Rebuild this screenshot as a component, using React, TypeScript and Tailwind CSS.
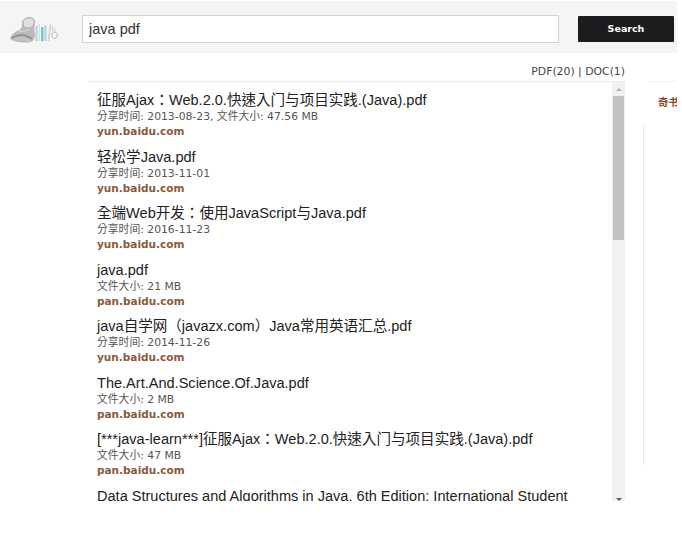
const results = [
  { title: '征服Ajax：Web.2.0.快速入门与项目实践.(Java).pdf', meta: '分享时间: 2013-08-23, 文件大小: 47.56 MB', source: 'yun.baidu.com' },
  { title: '轻松学Java.pdf', meta: '分享时间: 2013-11-01', source: 'yun.baidu.com' },
  { title: '全端Web开发：使用JavaScript与Java.pdf', meta: '分享时间: 2016-11-23', source: 'yun.baidu.com' },
  { title: 'java.pdf', meta: '文件大小: 21 MB', source: 'pan.baidu.com' },
  { title: 'java自学网（javazx.com）Java常用英语汇总.pdf', meta: '分享时间: 2014-11-26', source: 'yun.baidu.com' },
  { title: 'The.Art.And.Science.Of.Java.pdf', meta: '文件大小: 2 MB', source: 'pan.baidu.com' },
  { title: '[***java-learn***]征服Ajax：Web.2.0.快速入门与项目实践.(Java).pdf', meta: '文件大小: 47 MB', source: 'pan.baidu.com' },
  { title: 'Data Structures and Algorithms in Java, 6th Edition: International Student', meta: '', source: '' },
];

function Logo() {
  return (
    <svg width="50" height="28" viewBox="0 0 50 28" className="ml-[10px] shrink-0">
      {/* sketched figure */}
      <path d="M0 24 C1 19 5 17 9 15 C11 14 12 12 12 9 C12 5 15 2 19 2 C23 2 26 5 25 9 C24 12 24 15 25 19 C25 23 24 26 21 27 C15 28 5 28 0 24 Z" fill="#bdbbb9" />
      <path d="M13 8 C13 4 17 3 20 3 C23 3 25 6 24 9 C23 12 20 13 17 13 C15 13 13 11 13 8 Z" fill="#e2e0de" stroke="#a5a3a1" strokeWidth="0.7" />
      <path d="M2 23 C8 19 15 19 22 24" stroke="#8b8987" strokeWidth="1.3" fill="none" />
      <path d="M9 16 C12 17 16 16 20 14" stroke="#dddbd9" strokeWidth="1" fill="none" />
      <path d="M4 26 C9 23 14 23 20 26" stroke="#d8d6d4" strokeWidth="0.8" fill="none" />
      {/* books */}
      <rect x="25.5" y="11" width="2" height="15" fill="#a9d5da" />
      <rect x="28.5" y="9" width="1.5" height="17" fill="#c9e4e6" />
      <rect x="31" y="12" width="2.5" height="14" fill="#7fc1cb" />
      <rect x="34.5" y="10" width="2" height="16" fill="#a9d5da" />
      <path d="M37.5 26 L39.5 9 L41.5 10 L39.5 26 Z" fill="#c8dcdc" />
      {/* rabbit */}
      <path d="M42 19 C44 15 49 18 47 22 C45 25 41 23 42 19 Z" fill="none" stroke="#b5b8b6" strokeWidth="1" />
      <path d="M43 17 L42 11 M45 17 L45 13" stroke="#c4c6c4" strokeWidth="0.8" />
    </svg>
  );
}

export default function App() {
  return (
    <div className="w-[677px] h-[542px] overflow-hidden bg-white font-['Liberation_Sans','Noto_Sans_CJK_TC',sans-serif]">
      <header className="mt-px h-[52px] pt-[4px] bg-[#f5f5f5] flex items-center">
        <Logo />
        <input
          readOnly
          value="java pdf"
          className="ml-[22px] w-[477px] h-[28px] bg-white border border-[#d4d4d4] px-[6px] text-[14.5px] text-[#333] outline-none"
        />
        <button className="ml-[19px] w-[96px] h-[26px] bg-[#1c1c1e] rounded-[1px] text-white text-[9.5px] font-bold font-['DejaVu_Sans',sans-serif]">
          Search
        </button>
      </header>

      <div className="flex items-start">
        <main className="ml-[88px] w-[537px] shrink-0">
          <div className="h-[28px] pt-[12px] text-right text-[10.85px] leading-[13px] text-[#444] font-['DejaVu_Sans',sans-serif]">
            PDF(20) | DOC(1)
          </div>
          <div className="h-[420px] border-t border-[#eeeeee] flex overflow-hidden">
            <ul className="flex-1 pl-[9px] pt-[9px] overflow-hidden">
              {results.map((r) => (
                <li key={r.title} className="h-[56.5px]">
                  <div className="text-[14.55px] leading-[19px] text-[#222] whitespace-nowrap">{r.title}</div>
                  {r.meta && (
                    <div className="mt-px text-[10.8px] leading-[12px] text-[#555] font-['DejaVu_Sans','Noto_Sans_CJK_TC',sans-serif] whitespace-nowrap">
                      {r.meta}
                    </div>
                  )}
                  {r.source && (
                    <div className="mt-[1px] text-[10.5px] leading-[14px] font-bold text-[#8c5a3c] font-['DejaVu_Sans',sans-serif]">
                      {r.source}
                    </div>
                  )}
                </li>
              ))}
            </ul>
            <div className="w-[13px] bg-[#f1f1f1] flex flex-col items-center">
              <div className="h-[14px] flex items-center justify-center">
                <div className="w-0 h-0 border-x-[3px] border-x-transparent border-b-[3px] border-b-[#b4b4b4]" />
              </div>
              <div className="w-[11px] h-[144px] bg-[#c1c1c1]" />
              <div className="mt-auto h-[3px] flex items-end">
                <div className="w-0 h-0 border-x-[3px] border-x-transparent border-t-[3px] border-t-[#606060]" />
              </div>
            </div>
          </div>
        </main>

        <aside className="ml-[18px] flex-1 min-w-0 h-[412px] overflow-hidden">
          <div className="ml-[5px] mt-[28px] h-[45px] border-t border-[#f2f2f2] pl-[10px] pt-[13px] text-[10.5px] leading-[14px] font-bold text-[#8c4a32] whitespace-nowrap">
            奇书
          </div>
          <div className="h-[339px] border-l border-[#e8e8e8]" />
        </aside>
      </div>
    </div>
  );
}
